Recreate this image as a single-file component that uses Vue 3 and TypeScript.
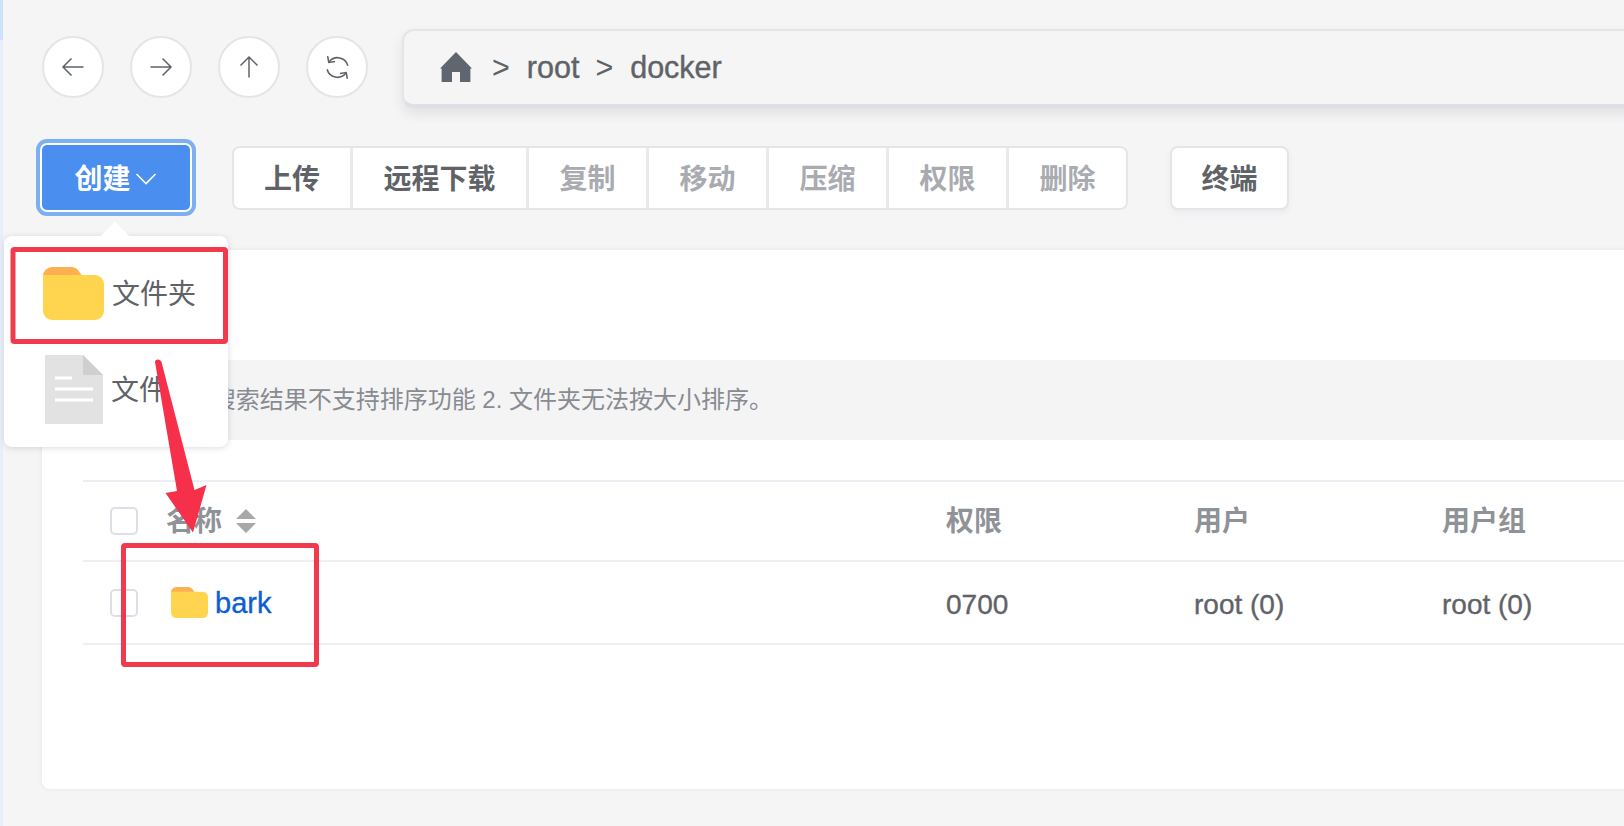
<script setup lang="ts">
const groupButtons = [
  { label: '上传', width: 119, disabled: false },
  { label: '远程下载', width: 176, disabled: false },
  { label: '复制', width: 120, disabled: true },
  { label: '移动', width: 120, disabled: true },
  { label: '压缩', width: 120, disabled: true },
  { label: '权限', width: 120, disabled: true },
  { label: '删除', width: 117, disabled: true },
]
</script>

<template>
  <div class="page">
    <div class="strip"></div>

    <header class="nav-row">
      <button class="circle" aria-label="后退">
        <svg width="24" height="20" viewBox="0 0 24 20" fill="none" stroke="currentColor" stroke-width="1.5">
          <path d="M22.5 10H2M10.5 1.5 2 10l8.5 8.5" />
        </svg>
      </button>
      <button class="circle" aria-label="前进">
        <svg width="24" height="20" viewBox="0 0 24 20" fill="none" stroke="currentColor" stroke-width="1.5">
          <path d="M1.5 10H22M13.5 1.5 22 10l-8.5 8.5" />
        </svg>
      </button>
      <button class="circle" aria-label="上级">
        <svg width="20" height="24" viewBox="0 0 20 24" fill="none" stroke="currentColor" stroke-width="1.5">
          <path d="M10 22.5V2M1.5 10.5 10 2l8.5 8.5" />
        </svg>
      </button>
      <button class="circle" aria-label="刷新">
        <svg width="29" height="29" viewBox="0 0 24 24" fill="none" stroke="currentColor" stroke-width="1.3">
          <path d="M5.2 7.2A8.8 8.8 0 0 1 20.6 10.5M18.8 16.8A8.8 8.8 0 0 1 3.4 13.5" />
          <path d="M3.8 2.600 4.800 7.800 10 7M20.200 21.400 19.200 16.200 14 17" />
        </svg>
      </button>

      <div class="path-bar">
        <svg class="home" width="32" height="30" viewBox="0 0 32 30">
          <path d="M16 0 32 16.5h-1.6V30H20V20h-8v10H1.600V16.500H0z" fill="#5f6670" />
        </svg>
        <span class="sep first">&gt;</span>
        <span class="crumb">root</span>
        <span class="sep">&gt;</span>
        <span class="crumb">docker</span>
      </div>
    </header>

    <section class="toolbar">
      <button class="create">
        <span class="create-label">创建</span>
        <svg width="22" height="12" viewBox="0 0 22 12" fill="none" stroke="#fff" stroke-width="1.6">
          <path d="M1.500 1 11 10.500 20.500 1" />
        </svg>
      </button>
      <div class="group">
        <button
          v-for="b in groupButtons"
          :key="b.label"
          class="group-btn"
          :class="{ disabled: b.disabled }"
          :style="{ width: b.width + 'px' }"
        >{{ b.label }}</button>
      </div>
      <button class="terminal">终端</button>
    </section>

    <main class="card">
      <div class="alert">注：1. 搜索结果不支持排序功能 2. 文件夹无法按大小排序。</div>
      <div class="table">
        <div class="row head">
          <span class="check"></span>
          <span class="col-name">
            <span class="name-label">名称</span>
            <svg class="sort" width="20" height="24" viewBox="0 0 20 24" fill="#a8a8a8">
              <path d="M10 0 20 10H0zM0 14h20L10 24z" />
            </svg>
          </span>
          <span class="col">权限</span>
          <span class="col">用户</span>
          <span class="col">用户组</span>
        </div>
        <div class="row body">
          <span class="check"></span>
          <span class="col-name">
            <svg class="small-folder" width="37" height="31" viewBox="0 0 61 53" preserveAspectRatio="none">
              <path d="M9 0h19c4 0 6 1.500 8 4.500L40 10H0V9a9 9 0 0 1 9-9z" fill="#fcb04f" />
              <path d="M0 8h52a9 9 0 0 1 9 9v27a9 9 0 0 1-9 9H9a9 9 0 0 1-9-9z" fill="#ffd54f" />
            </svg>
            <a class="link">bark</a>
          </span>
          <span class="col">0700</span>
          <span class="col">root (0)</span>
          <span class="col">root (0)</span>
        </div>
      </div>
    </main>

    <div class="dropdown">
      <div class="menu-item folder-item">
        <svg width="61" height="53" viewBox="0 0 61 53">
          <path d="M9 0h19c4 0 6 1.500 8 4.500L40 10H0V9a9 9 0 0 1 9-9z" fill="#fcb04f" />
          <path d="M0 8h52a9 9 0 0 1 9 9v27a9 9 0 0 1-9 9H9a9 9 0 0 1-9-9z" fill="#ffd54f" />
        </svg>
        <span class="menu-label">文件夹</span>
      </div>
      <div class="menu-item file-item">
        <svg width="58" height="69" viewBox="0 0 58 69">
          <path d="M1 0h37l20 20v48a1 1 0 0 1-1 1H1a1 1 0 0 1-1-1V1a1 1 0 0 1 1-1z" fill="#e2e2e2" />
          <path d="M38 0l20 20H38z" fill="#cfcfcf" />
          <path d="M10 23h17M10 34h38M10 45h38" stroke="#fff" stroke-width="3" />
        </svg>
        <span class="menu-label">文件</span>
      </div>
    </div>

    <svg class="annotations" width="1624" height="826" viewBox="0 0 1624 826" fill="none">
      <rect x="13" y="249.500" width="212.500" height="92" rx="1.500" stroke="#f13a4d" stroke-width="5" />
      <rect x="123.500" y="545.500" width="193" height="119" rx="1.500" stroke="#f13a4d" stroke-width="5" />
      <path
        d="M155 362C155 358.500 160.500 358.500 161.500 362L194.500 490 206.500 485 193 532.500 165.500 493 177 491z"
        fill="#f6304a"
      />
    </svg>
  </div>
</template>

<style>
html,
body {
  margin: 0;
  background: #f5f5f6;
}
</style>

<style scoped>
.page {
  position: relative;
  width: 1624px;
  height: 826px;
  overflow: hidden;
  box-sizing: border-box;
  padding-top: 29px;
  background: #f5f5f6;
  color: #5f6368;
  font-family: "Liberation Sans", "Noto Sans CJK SC", sans-serif;
}

button {
  font-family: inherit;
  padding: 0;
  margin: 0;
}

.strip {
  position: absolute;
  left: 0;
  top: 0;
  bottom: 0;
  width: 3px;
  background: linear-gradient(#cfe2fb 0, #cfe2fb 40px, #e8effc 40px, #e8effc 100%);
}

.nav-row {
  display: flex;
  align-items: center;
  padding-left: 42px;
  height: 76px;
}

.circle {
  width: 62px;
  height: 62px;
  margin-right: 26px;
  flex: none;
  display: flex;
  align-items: center;
  justify-content: center;
  border-radius: 50%;
  border: 2px solid #e4e5e8;
  box-sizing: border-box;
  background: #fff;
  color: #5f6368;
}

.circle:nth-child(4) {
  margin-right: 34px;
}

.path-bar {
  flex: none;
  align-self: flex-start;
  width: 1300px;
  height: 79px;
  display: flex;
  align-items: center;
  box-sizing: border-box;
  padding: 0 0 2px 36px;
  background: #f5f5f6;
  border: 2px solid #e4e4e9;
  border-bottom: 4px solid #dfdfe7;
  border-radius: 12px;
  box-shadow: 0 6px 12px rgba(60, 60, 80, 0.1);
  font-size: 30.500px;
  -webkit-text-stroke: 0.4px currentColor;
}

.home {
  flex: none;
}

.sep,
.crumb {
  position: relative;
  top: 1px;
}

.sep {
  margin: 0 17px 0 0;
  -webkit-text-stroke: 0;
}

.sep.first {
  margin-left: 20px;
}

.crumb {
  margin-right: 16px;
}

.toolbar {
  display: flex;
  align-items: center;
  height: 65px;
  margin-top: 40px;
  padding-left: 42px;
}

.create {
  flex: none;
  width: 148px;
  height: 65px;
  display: flex;
  align-items: center;
  justify-content: center;
  gap: 3px;
  border: none;
  border-radius: 5px;
  background: #4a8ef0;
  box-shadow: 0 0 0 2px #fff, 0 0 0 6px #7db0f0;
  color: #fff;
  font-size: 28px;
  font-weight: 700;
}

.create-label {
  position: relative;
  top: -1px;
  left: -1px;
}

.create svg {
  margin-top: 3px;
}

.group {
  display: flex;
  margin-left: 42px;
  height: 64px;
  border-radius: 8px;
  background: #fff;
  border: 2px solid #e4e5e8;
  box-sizing: border-box;
  overflow: hidden;
}

.group-btn {
  flex: none;
  height: 100%;
  border: none;
  border-right: 3px solid #e9eaec;
  background: #fff;
  color: #5f6368;
  font-size: 28px;
  font-weight: 700;
  box-sizing: border-box;
  padding-bottom: 2px;
}

.group-btn:last-child {
  border-right: none;
}

.group-btn.disabled {
  color: #a9abb0;
}

.terminal {
  flex: none;
  width: 119px;
  height: 64px;
  margin-left: 42px;
  border: 2px solid #e4e5e8;
  border-radius: 8px;
  background: #fff;
  color: #5f6368;
  font-size: 28px;
  font-weight: 700;
  box-sizing: border-box;
  padding-bottom: 2px;
  box-shadow: 0 3px 6px rgba(60, 60, 80, 0.05);
}

.card {
  width: 1680px;
  height: 539px;
  margin: 40px 0 0 42px;
  padding: 110px 0 0 41px;
  box-sizing: border-box;
  background: #fff;
  border-radius: 8px;
  box-shadow: 0 0 4px rgba(60, 60, 80, 0.08);
}

.alert {
  height: 80px;
  line-height: 80px;
  padding-left: 54px;
  background: #f4f4f5;
  color: #888b91;
  font-size: 24px;
  white-space: nowrap;
}

.table {
  margin-top: 40px;
  border-top: 2px solid #eceef3;
}

.row {
  display: grid;
  grid-template-columns: 84px 779px 248px 248px 248px;
  align-items: center;
  font-size: 28px;
  border-bottom: 2px solid #eeeff3;
  box-sizing: border-box;
}

.head {
  height: 80px;
  color: #8f9296;
  font-weight: 700;
}

.head .col,
.name-label {
  position: relative;
  top: -2px;
}

.name-label {
  margin-left: -1px;
}

.body {
  height: 83px;
  -webkit-text-stroke: 0.35px currentColor;
}

.body .col {
  position: relative;
  top: 2px;
}

.check {
  width: 28px;
  height: 28px;
  margin-left: 27px;
  box-sizing: border-box;
  border: 2px solid #dcdfe6;
  border-radius: 5px;
  background: #fff;
}

.col-name {
  display: flex;
  align-items: center;
}

.sort {
  margin-left: 14px;
}

.small-folder {
  margin-left: 4px;
  margin-right: 7px;
}

.link {
  color: #0b5fd1;
  font-size: 29px;
  position: relative;
  top: 1px;
}

.dropdown {
  position: absolute;
  left: 4px;
  top: 236px;
  width: 224px;
  height: 211px;
  box-sizing: border-box;
  padding-top: 31px;
  background: #fff;
  border-radius: 8px;
  box-shadow: 0 1px 6px rgba(40, 40, 60, 0.16);
  font-size: 28px;
  color: #5f6368;
}

.dropdown::before {
  content: "";
  position: absolute;
  left: 101px;
  top: -10px;
  width: 20px;
  height: 20px;
  background: #fff;
  transform: rotate(45deg);
}

.menu-item {
  position: relative;
  display: flex;
  align-items: center;
}

.menu-label {
  position: relative;
  top: -2px;
}

.folder-item {
  height: 53px;
  padding-left: 39px;
  gap: 8px;
}

.file-item {
  height: 69px;
  margin-top: 35px;
  padding-left: 41px;
  gap: 8px;
}

.annotations {
  position: absolute;
  left: 0;
  top: 0;
  pointer-events: none;
}
</style>
